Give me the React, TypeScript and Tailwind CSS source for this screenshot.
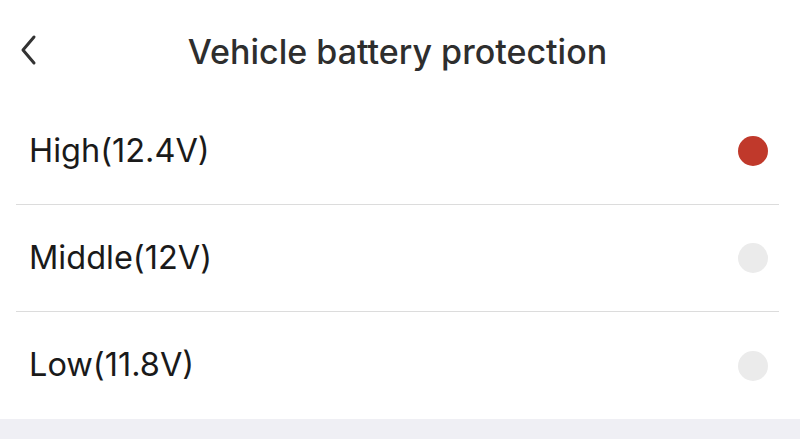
export default function App() {
  const options = [
    { id: 'high', label: 'High(12.4V)', selected: true },
    { id: 'middle', label: 'Middle(12V)', selected: false },
    { id: 'low', label: 'Low(11.8V)', selected: false },
  ]

  return (
    <div className="w-[800px] h-[439px] bg-[#efeff4] overflow-hidden" style={{ fontFamily: 'Inter, "Liberation Sans", Arial, sans-serif' }}>
      <div className="bg-white">
        <div className="relative h-[98px] flex items-center justify-center">
          <button className="absolute left-[18px] top-[34px] w-[22px] h-[32px] text-[#333]">
            <svg viewBox="0 0 22 32" className="w-[22px] h-[32px]" fill="none" stroke="currentColor" strokeWidth="3" strokeLinecap="round" strokeLinejoin="round">
              <path d="M16 3 L5 16 L16 29" />
            </svg>
          </button>
          <h1 className="pt-[4px] pr-[5px] text-[34px] font-medium text-[#2e2e2e]">Vehicle battery protection</h1>
        </div>

        <div className="pl-[16px] pr-[21px]">
          {options.map((o, i) => (
            <div
              key={o.id}
              className={`h-[107px] flex items-center justify-between ${i < options.length - 1 ? 'border-b border-[#dcdcdc]' : ''}`}
            >
              <span className="pl-[13px] text-[32.5px] text-[#1a1a1a]">{o.label}</span>
              <span className={`w-[30px] h-[30px] rounded-full mr-[11px] ${o.selected ? 'bg-[#c0392b]' : 'bg-[#ebebeb]'}`} />
            </div>
          ))}
        </div>
      </div>
    </div>
  )
}
